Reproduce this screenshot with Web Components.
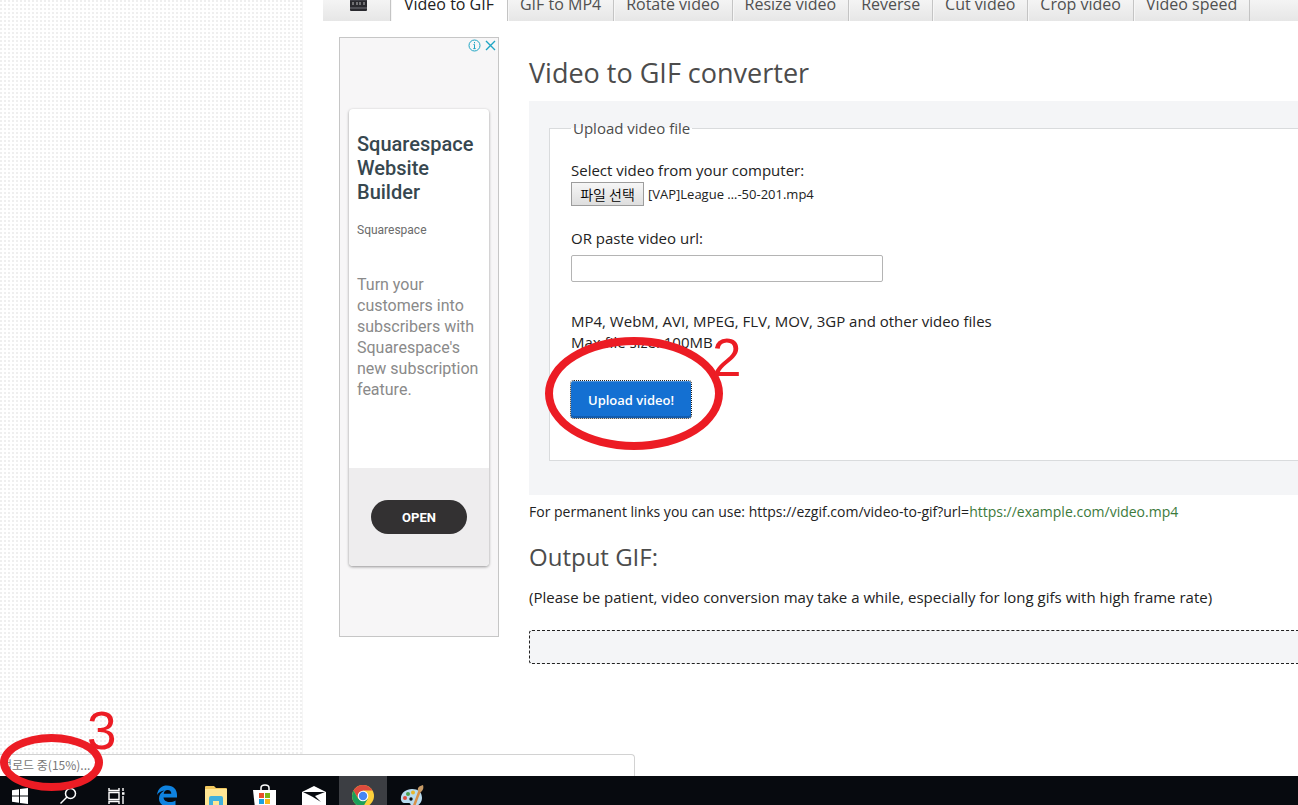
<!DOCTYPE html>
<html lang="en">
<head>
<meta charset="utf-8">
<title>Video to GIF converter</title>
<style>
  html, body { margin: 0; height: 100%; }
  body { font: 400 15px/21px "Open Sans", "Noto Sans CJK KR", sans-serif; color: #222; background: #fff; overflow: hidden; }
</style>
</head>
<body>
<desktop-shell>
  <site-page>
    <tool-tabs slot="tabs"></tool-tabs>
    <side-ad slot="ad"></side-ad>
    <section-title level="1">Video to GIF converter</section-title>
    <upload-form></upload-form>
    <permalink-note></permalink-note>
    <section-title level="2">Output GIF:</section-title>
    <output-area>(Please be patient, video conversion may take a while, especially for long gifs with high frame rate)</output-area>
  </site-page>
  <status-bubble slot="over">업로드 중(15%)...</status-bubble>
  <task-bar slot="taskbar"></task-bar>
  <red-mark slot="over" class="two" label="2"></red-mark>
  <red-mark slot="over" class="three" label="3"></red-mark>
</desktop-shell>

<script>
const define = (name, html, setup) => {
  const t = document.createElement('template');
  t.innerHTML = html;
  customElements.define(name, class extends HTMLElement {
    constructor() {
      super();
      this.attachShadow({ mode: 'open' }).append(t.content.cloneNode(true));
    }
    connectedCallback() { if (setup) setup(this, this.shadowRoot); }
  });
};

define('desktop-shell', `
<style>
  :host { display: grid; grid-template-rows: minmax(0, 1fr) 29px; height: 100vh; position: relative; overflow: hidden; }
  .view { overflow: hidden; }
  ::slotted(status-bubble) { position: absolute; left: 0; bottom: 29px; }
  ::slotted(.two) { position: absolute; left: 545px; top: 337px; width: 178px; height: 113px; --num-x: 167px; --num-y: -6px; }
  ::slotted(.three) { position: absolute; left: 0; bottom: 14px; width: 103px; height: 57px; --num-x: 87px; --num-y: -30px; }
</style>
<div class="view"><slot></slot></div>
<slot name="taskbar"></slot>
<slot name="over"></slot>`);

define('site-page', `
<style>
  :host { display: grid; grid-template-columns: 303px minmax(0, 1fr); height: 100%; }
  .gutter { background: #fff radial-gradient(circle at 1px 1px, #efefef 1px, transparent 1px) 0 0 / 4px 4px; border-right: 1px solid #f6f6f6; }
  .sheet { padding-left: 19px; }
  .cols { display: grid; grid-template-columns: 160px minmax(0, 1fr); gap: 30px; padding: 16px 0 0 16px; }
  .sheet { padding-left: 20px; }
  main { display: block; padding-top: 20px; }
</style>
<div class="gutter"></div>
<div class="sheet">
  <slot name="tabs"></slot>
  <div class="cols"><slot name="ad"></slot><main><slot></slot></main></div>
</div>`);

define('tool-tabs', `
<style>
  :host { display: block; height: 21px; overflow: hidden; }
  nav { display: flex; align-items: flex-end; height: 21px; background: linear-gradient(#f4f4f4, #e6e6e6); }
  a { display: flex; align-items: center; justify-content: center; flex: none; box-sizing: border-box; height: 34px; padding: 0 12px 0 12px;
      border-right: 1px solid #c4c4c4; color: #505050; font-size: 16px; text-decoration: none; }
  a + a { box-shadow: inset 1px 0 #f6f6f6; }
  a.home { width: 68px; align-items: flex-start; padding-top: 2px; }
  a.home svg { margin-left: 4px; }
  a.on { background: #fff; color: #222; padding: 0 13px; }
</style>
<nav>
  <a class="home" href="#home" aria-label="Home"><svg width="18" height="22" viewBox="0 0 18 22">
    <path d="M0 4 17 0v4L1 8z" fill="#555"/><rect y="8" width="17" height="14" rx="1" fill="#29292e"/>
    <path d="M0 19h17" stroke="#77777c"/><path d="M3 13v3M7 13v3M10 13v3M14 13v3" stroke="#bbb"/><path d="M0 11h17" stroke="#55555c"/></svg></a>
  <a class="on" href="#video-to-gif">Video to GIF</a>
  <a href="#gif-to-mp4">GIF to MP4</a>
  <a href="#rotate">Rotate video</a>
  <a href="#resize">Resize video</a>
  <a href="#reverse">Reverse</a>
  <a href="#cut">Cut video</a>
  <a href="#crop">Crop video</a>
  <a href="#speed">Video speed</a>
</nav>`);

define('side-ad', `
<style>
  :host { display: block; box-sizing: border-box; height: 600px; border: 1px solid #c6c6c6; background: #f7f6f7; font-family: Roboto, sans-serif; font-weight: 400; }
  .marks { display: flex; justify-content: flex-end; gap: 3px; height: 15px; padding: 1px 2px 0 0; box-sizing: border-box; }
  article { display: flex; flex-direction: column; height: 457px; margin: 56px 9px 0; border-radius: 4px; background: #fff; overflow: hidden; box-shadow: 0 1px 3px #0006; }
  .copy { flex: 1; padding: 23px 8px 0; }
  h3 { margin: 0; font-size: 20px; line-height: 24px; font-weight: 500; color: #37474f; }
  .brand { margin: 16px 0 0; font-size: 12px; line-height: 20px; color: #6b6b6b; }
  .text { margin: 34px 0 0; font-size: 16px; line-height: 21px; color: #8a8a8a; }
  footer { display: grid; place-items: center; height: 98px; background: #eeedee; }
  button { width: 96px; height: 34px; border: 0; border-radius: 17px; background: #333132; color: #fff; font: 700 13px/34px Roboto, sans-serif; }
</style>
<div class="marks">
  <svg width="13" height="13" viewBox="0 0 13 13" fill="none" stroke="#1fa5c4"><circle cx="6.5" cy="6.5" r="5.5"/><path d="M6.5 5.5V10M6.5 3v1.3M5.5 5.5h1M5.3 9.6h2.4"/></svg>
  <svg width="12" height="13" viewBox="0 0 12 13" stroke="#1fa5c4" stroke-width="1.4"><path d="M2 2l9 9M11 2l-9 9"/></svg>
</div>
<article>
  <div class="copy">
    <h3>Squarespace Website Builder</h3>
    <p class="brand">Squarespace</p>
    <p class="text">Turn your customers into subscribers with Squarespace's new subscription feature.</p>
  </div>
  <footer><button type="button">OPEN</button></footer>
</article>`);

define('section-title', `
<style>
  :host { display: block; }
  h1, h2 { margin: 0; font-weight: inherit; color: #4c4c4c; }
  h1 { font-size: 27px; line-height: 32px; padding-bottom: 12px; }
  h2 { font-size: 24px; line-height: 32px; padding: 19px 0 14px; }
</style>`, (el, root) => {
  if (root.querySelector('slot')) return;
  const h = document.createElement('h' + el.getAttribute('level'));
  h.append(document.createElement('slot'));
  root.append(h);
});

define('upload-form', `
<style>
  :host { display: block; padding: 17px 0 33px 20px; background: #f4f5f7; }
  fieldset { margin: 0; padding: 21px 21px 42px; border: 1px solid #d9dbdd; border-right: 0; min-width: 0; background: #fff; }
  legend { padding: 0 2px; color: #4c4c4c; line-height: 21px; }
  label { display: block; }
  .row { display: flex; align-items: center; gap: 4px; height: 26px; margin-bottom: 21px; }
  .pick { height: 24px; width: 73px; padding: 0; border: 1px solid #9d9d9d; background: linear-gradient(#f6f6f6, #dedede); color: #000; font: 350 14px/20px "Noto Sans CJK KR", sans-serif; }
  .name { font-size: 13px; }
  input[type=url] { display: block; box-sizing: border-box; width: 312px; height: 27px; margin: 6px 0 29px; padding: 0 6px; border: 1px solid #b4b4b4; border-radius: 2px; font: inherit; }
  p { margin: 0; }
  .go { display: block; box-sizing: border-box; width: 120px; height: 37px; margin: 28px 0 0; border: 0; border-radius: 3px; background: #1470d2; box-shadow: inset 0 1px #4a92dd, inset 0 -2px #125cae; outline: 1px dotted #222; color: #fff; font: 600 13px/20px "Open Sans", sans-serif; }
  form { padding-bottom: 1px; }
</style>
<form>
  <fieldset>
    <legend>Upload video file</legend>
    <label for="file">Select video from your computer:</label>
    <div class="row"><input id="file" type="file" hidden><button class="pick" type="button">파일 선택</button><span class="name">[VAP]League …-50-201.mp4</span></div>
    <label for="url">OR paste video url:</label>
    <input id="url" type="url">
    <p>MP4, WebM, AVI, MPEG, FLV, MOV, 3GP and other video files<br>Max file size: 100MB</p>
    <button class="go" type="button">Upload video!</button>
  </fieldset>
</form>`, (el, root) => {
  root.querySelector('.pick').onclick = () => root.querySelector('#file').click();
});

define('permalink-note', `
<style>
  :host { display: block; padding-top: 6px; font-size: 14px; white-space: nowrap; }
  a { color: #3c7a3c; text-decoration: none; }
</style>
For permanent links you can use: https://ezgif.com/video-to-gif?url=<a href="https://example.com/video.mp4">https://example.com/video.mp4</a>`);

define('output-area', `
<style>
  :host { display: block; }
  p { margin: 0 0 22px; white-space: nowrap; }
  .box { box-sizing: border-box; height: 34px; border: 1px dashed #222; border-right: 0; border-radius: 3px 0 0 3px; background: #f4f5f7; }
</style>
<p><slot></slot></p>
<div class="box"></div>`);

define('status-bubble', `
<style>
  :host { display: block; box-sizing: border-box; width: 635px; height: 22px; padding-left: 1px; border: 1px solid #d2d2d2; border-width: 1px 1px 0 0; border-radius: 0 4px 0 0; background: #fff; color: #777; font: 400 12px/20px "Noto Sans CJK KR", sans-serif; }
</style>
<slot></slot>`);

define('red-mark', `
<style>
  :host { display: block; box-sizing: border-box; border: 8px solid #ec1c24; border-radius: 50%; pointer-events: none; }
  span { position: absolute; left: var(--num-x); top: var(--num-y); margin: -8px; color: #ec1c24; font: 400 53px/53px "Liberation Sans", sans-serif; }
</style>
<span></span>`, (el, root) => { root.querySelector('span').textContent = el.getAttribute('label'); });

define('task-bar', `
<style>
  :host { display: block; overflow: hidden; background: #070a0f; }
  nav { display: flex; gap: 1px; height: 40px; }
  button { display: grid; place-items: center; flex: none; width: 48px; height: 40px; padding: 0; border: 0; background: none; }
  button:first-child { width: 44px; padding-right: 4px; }
  button.on { background: #3c3e43; }
</style>
<nav>
  <button aria-label="Start"><svg width="16" height="16" viewBox="0 0 16 16" fill="#fff"><path d="M0 2.3 7 1.3V7.5H0zM8 1.1 16 0V7.5H8zM0 8.5H7V14.7L0 13.7zM8 8.5H16V16L8 14.9z"/></svg></button>
  <button aria-label="Search"><svg width="18" height="18" viewBox="0 0 18 18" fill="none" stroke="#fff" stroke-width="1.5"><circle cx="10.500" cy="6.5" r="5"/><path d="M7 10 .5 16.500"/></svg></button>
  <button aria-label="Task view"><svg width="21" height="18" viewBox="0 0 21 18" fill="none" stroke="#fff" stroke-width="1.4"><path d="M1 1v2.500h10V1M1 17v-2.500h10V17M1 5.500h10v7H1zM15 1v3M15 9v8"/><path d="M14 6.500h2.500" stroke-width="2.500"/></svg></button>
  <button aria-label="Edge"><svg width="22" height="22" viewBox="0 0 22 22"><path d="M1 10C2 3 6 .5 11 .5c6.500 0 10 4 10 9.500v2.500H7.500c.3 3 3 4.500 6 4.500 2.500 0 4.500-.7 6-1.600V20c-2 1.200-4.500 1.700-7 1.700C6.500 21.700 3 18 3 13.500 3 10 5 7 8.500 5.500 5 6 2.500 7.500 1 10zM7.700 8.800h7.600C15.300 6.500 14 5 11.700 5S8 6.500 7.700 8.800z" fill="#0f83e0"/></svg></button>
  <button aria-label="File Explorer"><svg width="22" height="20" viewBox="0 0 22 20"><path d="M0 1q0-1 1-1h8l2 2h10q1 0 1 1v17H0z" fill="#f0c75e"/><path d="M0 3h22v17H0z" fill="#ffe694"/><path d="M4 20v-8q0-2 2-2h10q2 0 2 2v8h-4v-5H8v5z" fill="#41b0dc"/></svg></button>
  <button aria-label="Store"><svg width="24" height="24" viewBox="0 0 24 24"><path d="M8 7V4q0-3 4-3t4 3v3" fill="none" stroke="#fff" stroke-width="1.500"/><path d="M0 6h23v18H2z" fill="#fff"/><path d="M6 9h5v5H6z" fill="#e8502a"/><path d="M12 9h5v5h-5z" fill="#7cb518"/><path d="M6 15h5v5H6z" fill="#1aa0e0"/><path d="M12 15h5v5h-5z" fill="#f9b716"/></svg></button>
  <button aria-label="Mail"><svg width="24" height="20" viewBox="0 0 24 20"><path d="M0 6 12 0l12 6v14H0z" fill="#fff"/><path d="M1 6h22L13 10l6 6-9-5.500z" fill="#070a0f"/></svg></button>
  <button class="on" aria-label="Chrome"><svg width="22" height="22" viewBox="0 0 22 22"><circle cx="11" cy="11" r="11" fill="#fdd03b"/><path d="M1.500 5.500A11 11 0 0 1 20.500 5.500H11L6.200 13.700z" fill="#dd4b3e"/><path d="M1.500 5.500A11 11 0 0 0 11 22l4.800-8.300H6.200z" fill="#1b9f5a"/><circle cx="11" cy="11" r="5.300" fill="#fff"/><circle cx="11" cy="11" r="4.200" fill="#4587f3"/></svg></button>
  <button aria-label="Paint"><svg width="24" height="24" viewBox="0 0 24 24"><path d="M1 16C0 9 6 5 12 5s10 3 10 9-6 9-9 9c-4 0-1-4-4-4-4 0-7 1-8-3z" fill="#b9dcf0"/><circle cx="5" cy="14" r="2" fill="#dc4b3c"/><circle cx="8" cy="10" r="2" fill="#4ba04f"/><circle cx="13" cy="8.500" r="2" fill="#e8b72e"/><circle cx="11" cy="15" r="1.700" fill="#111"/><path d="M20 6 14 22" stroke="#d9904a" stroke-width="2.500"/><path d="M18 7c-1-3 1-5 5-6 1 3 0 5-2 7z" fill="#c69a66"/></svg></button>
</nav>`);
</script>
</body>
</html>
